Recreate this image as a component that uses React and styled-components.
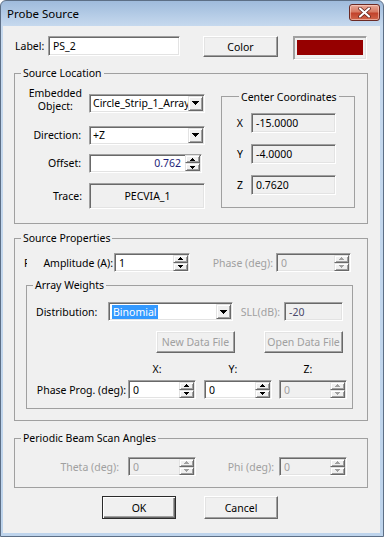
import styled, { createGlobalStyle } from "styled-components";

const GlobalStyle = createGlobalStyle`
  html, body { margin: 0; padding: 0; background: #fff; }
  body {
    font-family: "Noto Sans", "Open Sans", sans-serif;
    font-size: 10.5px;
    color: #000;
  }
  * { box-sizing: border-box; }
`;

const Window = styled.div`
  width: 384px;
  height: 537px;
  border: 1px solid #5d6f86;
  border-radius: 6px 6px 0 0;
  background: linear-gradient(to bottom, #9fbbdc 0, #c6d9ee 25px, #bed4ec 100%);
  display: flex;
  flex-direction: column;
  overflow: hidden;
`;

const TitleBar = styled.div`
  height: 25px;
  flex: none;
  display: flex;
  align-items: center;
  padding-left: 6px;
`;

const Title = styled.div`
  font-size: 11.5px;
  color: #000;
  flex: 1;
`;

const CloseButton = styled.div`
  align-self: flex-start;
  margin: 3px 3px 0 0;
  width: 31px;
  height: 17px;
  border: 1px solid #6b2a24;
  border-radius: 3px;
  background: linear-gradient(to bottom, #e8a999 0, #d77a63 45%, #c2432c 55%, #d0664b 100%);
  box-shadow: inset 0 0 0 1px rgba(255, 220, 210, 0.55);
  display: flex;
  align-items: center;
  justify-content: center;
`;

const Body = styled.div`
  margin: 0 3px 3px 2px;
  width: 377px;
  height: 507px;
  background: #f0f0f0;
  display: flex;
  flex-direction: column;
`;

const Row = styled.div`
  display: flex;
  align-items: ${p => p.$items || "center"};
  flex: none;
  height: ${p => p.$h}px;
  margin-top: ${p => p.$mt || 0}px;
  padding-left: ${p => p.$pl || 0}px;
`;

const Cell = styled.div`
  flex: none;
  width: ${p => p.$w}px;
  padding: 0 ${p => p.$pr || 0}px 0 ${p => p.$pl || 0}px;
  text-align: ${p => p.$align || "left"};
  color: ${p => (p.$disabled ? "#a0a0a0" : "#000")};
  white-space: nowrap;
  line-height: ${p => p.$lh || 14}px;
`;

const TwoLine = styled.div`
  display: inline-block;
  text-align: center;
`;

const Gap = styled.div`
  flex: none;
  width: ${p => p.$w}px;
`;

const Group = styled.fieldset`
  flex: none;
  margin: ${p => p.$mt || 0}px 0 0 ${p => p.$ml || 0}px;
  padding: 0;
  width: ${p => p.$w}px;
  height: ${p => p.$h}px;
  border: 1px solid #a0a0a0;
  min-inline-size: 0;
  display: flex;
  flex-direction: column;
`;

const Legend = styled.legend`
  margin-left: ${p => p.$ml ?? 6}px;
  padding: 0 2px;
  height: 16px;
  line-height: 16px;
  color: #000;
`;

const Field = styled.div`
  flex: none;
  width: ${p => p.$w}px;
  height: ${p => p.$h || 19}px;
  background: ${p => (p.$grey ? "#f0f0f0" : "#fff")};
  border: 1px solid;
  border-color: #a0a0a0 #fff #fff #a0a0a0;
  box-shadow: inset 1px 1px #696969, inset -1px -1px #e3e3e3;
  display: flex;
  align-items: center;
  justify-content: ${p =>
    p.$align === "right" ? "flex-end" : p.$align === "center" ? "center" : "flex-start"};
  padding: 0 ${p => p.$pr ?? 3}px 0 ${p => p.$pl ?? 4}px;
  color: ${p => p.$color || "#000"};
  white-space: nowrap;
  overflow: hidden;
`;

const FieldText = styled.span`
  flex: ${p => (p.$grow ? 1 : "none")};
  text-align: ${p => p.$align || "left"};
  overflow: hidden;
  padding-right: ${p => p.$pr || 0}px;
`;

const Selected = styled.span`
  background: #3399ff;
  color: #fff;
  padding: 0 1px;
  line-height: 14px;
`;

const SideButton = styled.div`
  flex: none;
  width: 15px;
  height: ${p => p.$h || 15}px;
  background: #f0f0f0;
  border: 1px solid;
  border-color: #e3e3e3 #696969 #696969 #e3e3e3;
  box-shadow: inset 1px 1px #fff, inset -1px -1px #a0a0a0;
  display: flex;
  align-items: center;
  justify-content: center;
`;

const SpinCol = styled.div`
  flex: none;
  display: flex;
  flex-direction: column;
  margin-left: auto;
`;

const Button = styled.div`
  flex: none;
  width: ${p => p.$w}px;
  height: ${p => p.$h || 22}px;
  background: #f0f0f0;
  border: 1px solid;
  border-color: ${p => (p.$default ? "#2b2b2b" : "#fff #696969 #696969 #fff")};
  box-shadow: ${p =>
    p.$default
      ? "inset 1px 1px #fff, inset -1px -1px #696969, inset -2px -2px #a0a0a0"
      : "inset -1px -1px #a0a0a0, inset 1px 1px #e3e3e3"};
  display: flex;
  align-items: center;
  justify-content: center;
  color: ${p => (p.$disabled ? "#a0a0a0" : "#000")};
  margin-left: ${p => p.$ml || 0}px;
`;

const Swatch = styled.div`
  flex: none;
  width: 74px;
  height: 24px;
  border: 1px solid;
  border-color: #a0a0a0 #fff #fff #a0a0a0;
  box-shadow: 1px 1px #a0a0a0 inset, -1px -1px 0 #e3e3e3 inset;
  padding: 3px;
  margin-left: ${p => p.$ml}px;
`;

const SwatchFill = styled.div`
  width: 66px;
  height: 15px;
  background: #960000;
`;

const Stray = styled.div`
  flex: none;
  width: 3px;
  overflow: hidden;
  margin-left: 9px;
  line-height: 14px;
`;

const Column = styled.div`
  display: flex;
  flex-direction: column;
  flex: none;
  width: ${p => p.$w}px;
`;

function Arrow({ dir = "down", w = 7, color = "#000" }) {
  const h = Math.ceil(w / 2);
  const pts = dir === "up" ? `0,${h} ${w},${h} ${w / 2},0` : `0,0 ${w},0 ${w / 2},${h}`;
  return (
    <svg width={w} height={h} viewBox={`0 0 ${w} ${h}`} shapeRendering="crispEdges">
      <polygon points={pts} fill={color} />
    </svg>
  );
}

function Combo({ w, children }) {
  return (
    <Field $w={w} $pr={1} $pl={3}>
      <FieldText $grow>{children}</FieldText>
      <SideButton>
        <Arrow />
      </SideButton>
    </Field>
  );
}

function Spin({ w, value, disabled, align, color }) {
  const arrow = disabled ? "#a0a0a0" : "#000";
  return (
    <Field $w={w} $grey={disabled} $pr={1} $color={disabled ? "#a0a0a0" : color}>
      <FieldText $grow $align={align} $pr={align === "right" ? 4 : 0}>
        {value}
      </FieldText>
      <SpinCol>
        <SideButton $h={8}>
          <Arrow dir="up" w={5} color={arrow} />
        </SideButton>
        <SideButton $h={8}>
          <Arrow w={5} color={arrow} />
        </SideButton>
      </SpinCol>
    </Field>
  );
}

export default function App() {
  return (
    <>
      <GlobalStyle />
      <Window>
        <TitleBar>
          <Title>Probe Source</Title>
          <CloseButton>
            <svg width="13" height="11" viewBox="0 0 13 11">
              <path
                d="M2 1.5 L11 9.5 M11 1.5 L2 9.5"
                stroke="#5a1d16"
                strokeWidth="3.6"
                strokeLinecap="round"
              />
              <path
                d="M2 1.5 L11 9.5 M11 1.5 L2 9.5"
                stroke="#fff"
                strokeWidth="2.2"
                strokeLinecap="round"
              />
            </svg>
          </CloseButton>
        </TitleBar>
        <Body>
          <Row $h={24} $mt={10} $pl={12} $items="flex-start">
            <Cell $w={33} $lh={20}>Label:</Cell>
            <Field $w={132} $h={20}>PS_2</Field>
            <Button $w={75} $h={21} $ml={23}>Color</Button>
            <Swatch $ml={15}>
              <SwatchFill />
            </Swatch>
          </Row>

          <Group $mt={5} $ml={11} $w={354} $h={159}>
            <Legend>Source Location</Legend>
            <Row $h={126}>
              <Column $w={190}>
                <Row $h={26} $mt={7} $items="flex-end">
                  <Cell $w={74} $pr={7} $lh={13} $align="right">
                    <TwoLine>
                      Embedded
                      <br />
                      Object:
                    </TwoLine>
                  </Cell>
                  <Combo w={116}>Circle_Strip_1_Array</Combo>
                </Row>
                <Row $h={19} $mt={13}>
                  <Cell $w={74} $pr={8} $align="right">Direction:</Cell>
                  <Combo w={116}>+Z</Combo>
                </Row>
                <Row $h={19} $mt={9}>
                  <Cell $w={74} $pr={8} $align="right">Offset:</Cell>
                  <Spin w={113} value="0.762" align="right" color="#1e1e78" />
                </Row>
                <Row $h={26} $mt={10}>
                  <Cell $w={74} $pr={7} $align="right">Trace:</Cell>
                  <Field $w={116} $h={26} $grey $align="center">PECVIA_1</Field>
                </Row>
              </Column>
              <Group $mt={8} $ml={16} $w={134} $h={119}>
                <Legend $ml={17}>Center Coordinates</Legend>
                <Row $h={20} $mt={8}>
                  <Cell $w={29} $pr={8} $align="right">X</Cell>
                  <Field $w={85} $h={20} $grey>-15.0000</Field>
                </Row>
                <Row $h={20} $mt={11}>
                  <Cell $w={29} $pr={8} $align="right">Y</Cell>
                  <Field $w={85} $h={20} $grey>-4.0000</Field>
                </Row>
                <Row $h={20} $mt={11}>
                  <Cell $w={29} $pr={8} $align="right">Z</Cell>
                  <Field $w={85} $h={20} $grey>0.7620</Field>
                </Row>
              </Group>
            </Row>
          </Group>

          <Group $mt={6} $ml={11} $w={354} $h={191}>
            <Legend>Source Properties</Legend>
            <Row $h={19} $mt={7}>
              <Stray>P</Stray>
              <Cell $w={87} $pr={1} $align="right">Amplitude (A):</Cell>
              <Spin w={76} value="1" />
              <Cell $w={86} $pr={3} $align="right" $disabled>Phase (deg):</Cell>
              <Spin w={75} value="0" disabled />
            </Row>
            <Group $mt={5} $ml={11} $w={327} $h={132}>
              <Legend>Array Weights</Legend>
              <Row $h={19} $mt={9}>
                <Cell $w={81} $pl={9}>Distribution:</Cell>
                <Combo w={125}>
                  <Selected>Binomial</Selected>
                </Combo>
                <Cell $w={51} $pr={4} $align="right" $disabled>SLL(dB):</Cell>
                <Field $w={59} $grey $color="#4a4a6a">-20</Field>
              </Row>
              <Row $h={22} $mt={10} $pl={129}>
                <Button $w={79} $disabled>New Data File</Button>
                <Button $w={79} $ml={29} $disabled>Open Data File</Button>
              </Row>
              <Row $h={14} $mt={9} $pl={101}>
                <Cell $w={68} $pr={10} $align="center">X:</Cell>
                <Gap $w={8} />
                <Cell $w={68} $pr={10} $align="center">Y:</Cell>
                <Gap $w={7} />
                <Cell $w={68} $pr={10} $align="center">Z:</Cell>
              </Row>
              <Row $h={19} $mt={4}>
                <Cell $w={101} $pr={2} $align="right">Phase Prog. (deg):</Cell>
                <Spin w={68} value="0" />
                <Gap $w={8} />
                <Spin w={68} value="0" />
                <Gap $w={7} />
                <Spin w={68} value="0" disabled />
              </Row>
            </Group>
          </Group>

          <Group $mt={9} $ml={11} $w={354} $h={58}>
            <Legend>Periodic Beam Scan Angles</Legend>
            <Row $h={19} $mt={11}>
              <Cell $w={113} $pr={9} $align="right" $disabled>Theta (deg):</Cell>
              <Spin w={68} value="0" disabled />
              <Cell $w={83} $pr={5} $align="right" $disabled>Phi (deg):</Cell>
              <Spin w={68} value="0" disabled />
            </Row>
          </Group>

          <Row $h={23} $mt={8} $pl={99}>
            <Button $w={74} $h={23} $default>OK</Button>
            <Button $w={74} $h={23} $ml={28}>Cancel</Button>
          </Row>
        </Body>
      </Window>
    </>
  );
}
